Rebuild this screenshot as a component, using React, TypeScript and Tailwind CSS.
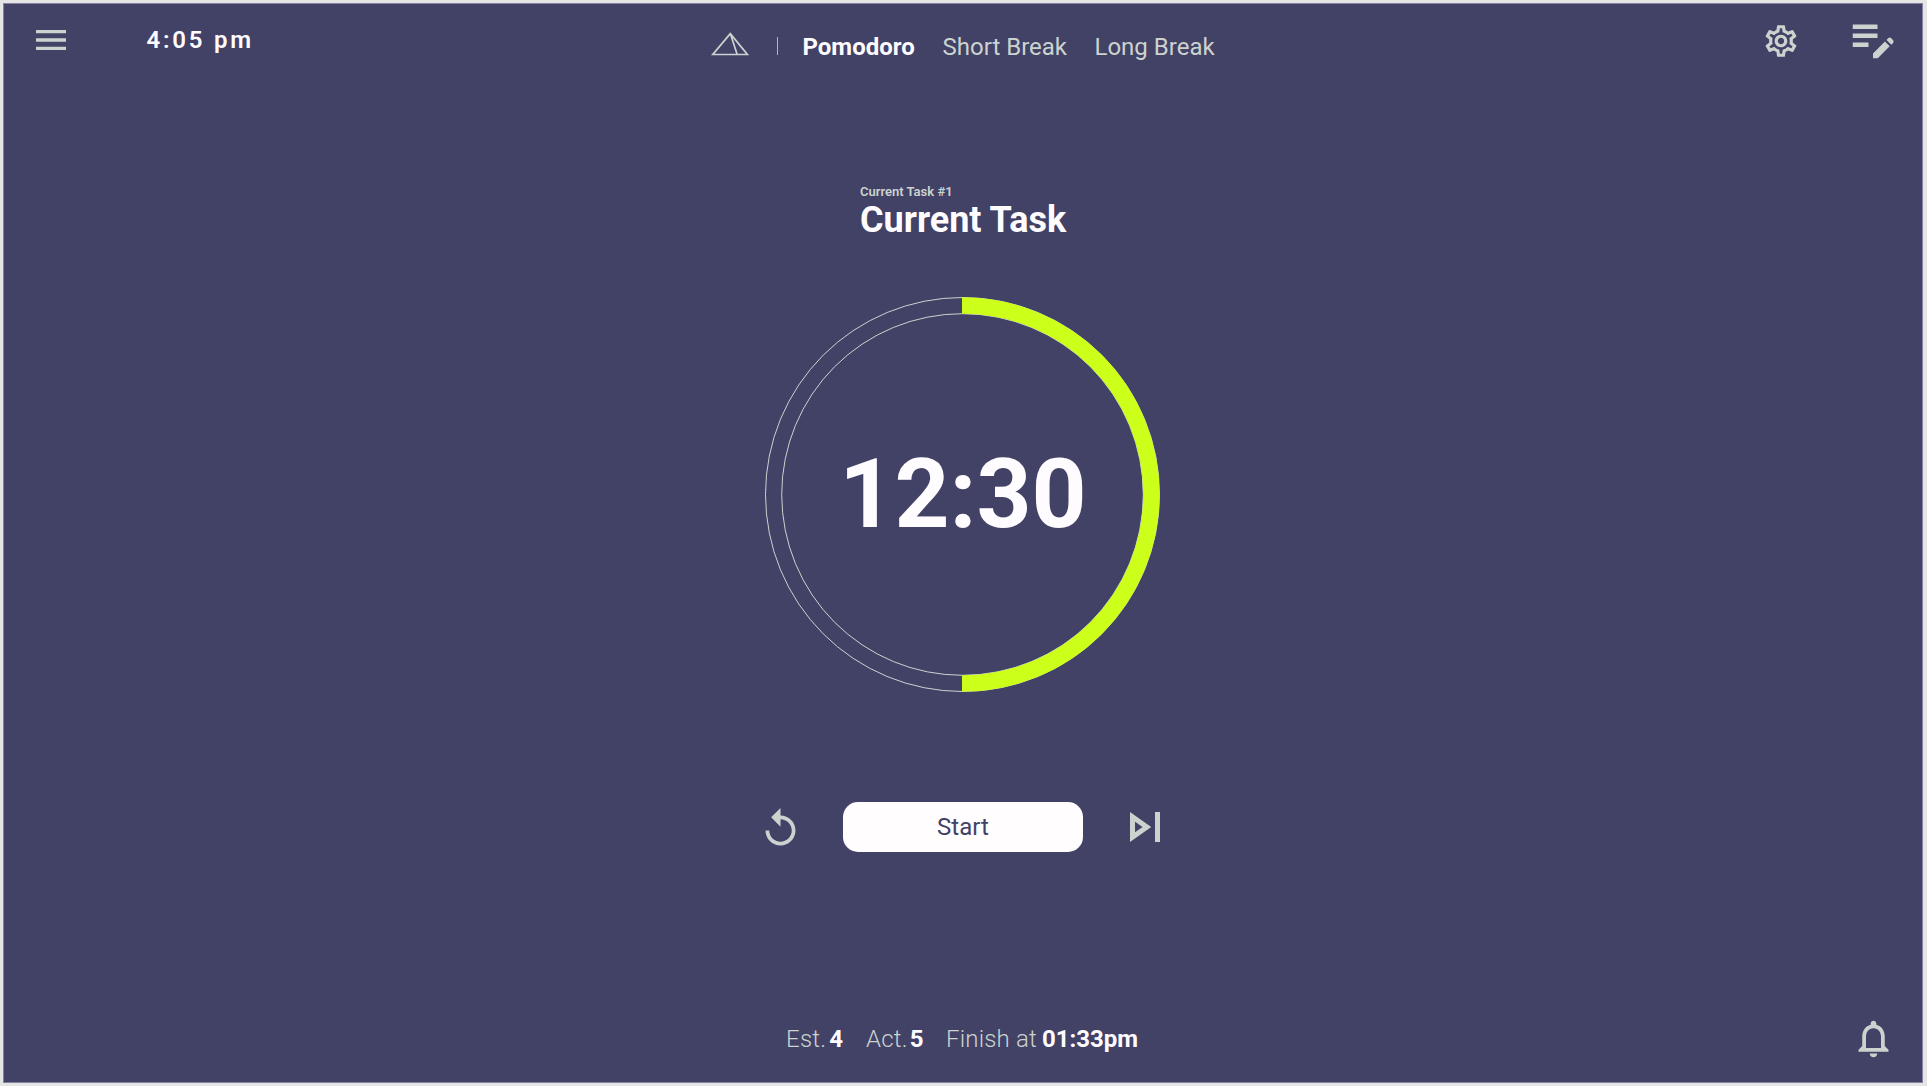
import React from "react";
import { MdMenu, MdOutlineSettings, MdEditNote, MdReplay, MdOutlineSkipNext, MdNotificationsNone } from "react-icons/md";

function Header() {
  return (
    <header className="flex h-[80px] items-start">
      <button className="ml-[26.5px] mt-4" aria-label="Menu">
        <MdMenu size={40} />
      </button>
      <span className="ml-[76px] mt-[22px] w-[140px] whitespace-nowrap text-[24px] font-semibold leading-7 tracking-[0.115em] text-[#fffcff]">
        4:05 pm
      </span>
      <nav className="ml-[421px] mt-[29px] flex w-[560px] text-[24px] leading-7">
        <svg className="-mt-px ml-[2px] h-[26px] w-[40px] shrink-0" viewBox="0 0 40 26" fill="none" stroke="currentColor" strokeWidth="1.7">
          <path d="M20.3 1.6 L2.8 22.5 H37.4 Z M20.3 1.6 L27.2 22.5" />
        </svg>
        <span className="ml-[27px] mt-1 h-[18px] w-px bg-[#b2b5be]" />
        <a className="ml-[25px] w-[140px] shrink-0 font-bold text-[#fffcff]">Pomodoro</a>
        <a className="w-[152px] shrink-0">Short Break</a>
        <a className="shrink-0">Long Break</a>
      </nav>
      <button className="ml-auto mt-[17.5px]" aria-label="Settings">
        <MdOutlineSettings size={38} />
      </button>
      <button className="ml-[46px] mr-[22.3px] mt-[7px]" aria-label="Tasks">
        <MdEditNote size={54} />
      </button>
    </header>
  );
}

function Timer() {
  return (
    <div className="mt-[45px] grid place-items-center">
      <svg className="col-start-1 row-start-1" width="415" height="415" viewBox="0 0 415 415" fill="none">
        <g stroke="currentColor" strokeWidth="1">
          <circle cx="206.5" cy="207.5" r="197" />
          <circle cx="206.5" cy="207.5" r="180.8" />
        </g>
        <path d="M206 18.5 H206.5 A189 189 0 0 1 206.5 396.5 H206" stroke="#ccff1a" strokeWidth="16.4" />
      </svg>
      <span className="col-start-1 row-start-1 -mt-px text-[96px] font-bold leading-none text-[#fffcff]">12:30</span>
    </div>
  );
}

export default function App() {
  return (
    <div className="h-[1086px] w-[1927px] overflow-hidden bg-[#e5e5e5] p-[3px] font-['Roboto',sans-serif]">
      <main className="flex h-[1080px] w-[1920px] flex-col border border-[#8583a0] bg-[#424166] text-[#ccd3cf]">
        <Header />
        <section className="flex flex-col items-center pt-[100px]">
          <div className="w-[206px] whitespace-nowrap">
            <p className="text-[13px] font-semibold leading-4">Current Task #1</p>
            <h1 className="-mt-px mb-px text-[36px] font-bold leading-[42px] text-[#fffcff]">Current Task</h1>
          </div>
          <Timer />
        </section>
        <div className="mt-[95px] flex h-[60px] items-center pl-[753.6px]">
          <MdReplay size={45} className="mt-[2px]" />
          <button className="ml-[40.4px] h-[50px] w-[240px] rounded-[15px] bg-[#fffdfe] text-[24px] leading-7 text-[#424166]">
            Start
          </button>
          <MdOutlineSkipNext size={60} className="ml-8" />
        </div>
        <footer className="mt-auto flex h-[66px] items-start pl-[782px] text-[24px] leading-7">
          <p className="mt-[9px] w-[80px]"><span className="font-light tracking-[0.01em]">Est.</span><b className="ml-[3px] text-[#fffcff]">4</b></p>
          <p className="mt-[9px] w-[80px]"><span className="font-light tracking-[0.01em]">Act.</span><b className="ml-[2px] text-[#fffcff]">5</b></p>
          <p className="mt-[9px]"><span className="font-light tracking-[0.008em]">Finish at</span> <b className="-ml-px text-[#fffcff]">01:33pm</b></p>
          <MdNotificationsNone size={45} className="ml-auto mr-[26px]" />
        </footer>
      </main>
    </div>
  );
}
